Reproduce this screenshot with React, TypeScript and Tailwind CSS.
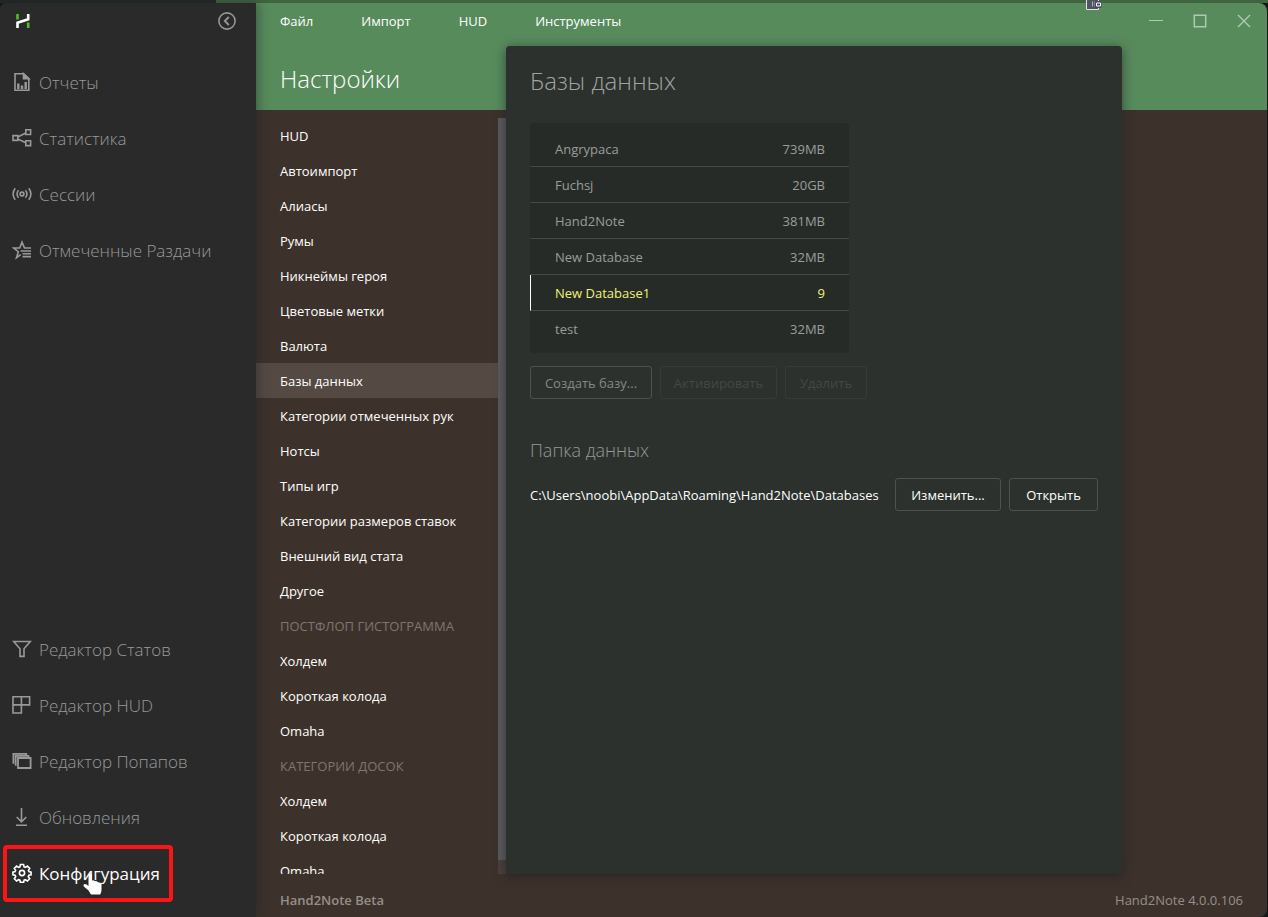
import React, { useState } from 'react';
import { clsx } from 'clsx';

interface IconProps {
  children: React.ReactNode;
}

function Icon({ children }: IconProps) {
  return (
    <svg viewBox="0 0 20 20" className="mb-[2px] w-5 h-5 shrink-0" fill="none" stroke="currentColor" strokeWidth="1.6" aria-hidden="true">
      {children}
    </svg>
  );
}

const mainItems = [
  {
    label: 'Отчеты',
    icon: (
      <Icon>
        <path d="M3 1.7h8.5l5.3 5v11.6H3z" />
        <path d="M11.5 1.7v5h5.3z" fill="currentColor" />
        <path d="M6.3 17v-5.5M10 17v-3.5M13.7 17v-7" strokeWidth="2.4" />
      </Icon>
    ),
  },
  {
    label: 'Статистика',
    icon: (
      <Icon>
        <path d="M1 7.6h4.8v4.8H1zM13.8 1.7h4.8v4.8h-4.8zM13.8 12.8h4.8v4.8h-4.8zM5.8 9l8-4M5.8 11l8 3.8" />
      </Icon>
    ),
  },
  {
    label: 'Сессии',
    icon: (
      <Icon>
        <circle cx="10" cy="10" r="1.9" />
        <path d="M6.6 6.2a5.4 5.4 0 0 0 0 7.600M13.4 6.2a5.4 5.4 0 0 1 0 7.600M3.2 4.300a9.6 9.6 0 0 0 0 11.4M16.8 4.300a9.6 9.6 0 0 1 0 11.4" />
      </Icon>
    ),
  },
  {
    label: 'Отмеченные Раздачи',
    icon: (
      <Icon>
        <path d="M19 8h-6.5L10 2.2 7.7 8H1.600l4.700 3.700-1.800 6 4.200-3M8.600 11H19M10.500 13.800H19M10.500 16.600H19" />
      </Icon>
    ),
  },
];

const bottomItems = [
  {
    label: 'Редактор Статов',
    icon: (
      <Icon>
        <path d="M1.700 2.500h16.600L12 9.800V17.400H8V9.800z" />
      </Icon>
    ),
  },
  {
    label: 'Редактор HUD',
    icon: (
      <Icon>
        <path d="M1 1.700h16.600v8.200H1zM9.400 1.700V18H1V9.900" />
      </Icon>
    ),
  },
  {
    label: 'Редактор Попапов',
    icon: (
      <Icon>
        <path d="M6 7h12.600v10H6z" strokeWidth="1.800" />
        <path d="M3.700 14.800V4.900h12.700V7M1.400 12.800V2.800h12.900v2" strokeWidth="1.800" />
      </Icon>
    ),
  },
  {
    label: 'Обновления',
    icon: (
      <Icon>
        <path d="M9.500 1v13.500M4.700 10l4.800 4.800 4.800-4.800M4 18.300h11" />
      </Icon>
    ),
  },
  {
    label: 'Конфигурация',
    icon: (
      <Icon>
        <circle cx="10" cy="10" r="2.600" />
        <path d="M8.400 1.500h3.200l.5 2.400 1.300.5 2-1.300 2.300 2.300-1.300 2 .5 1.200 2.200.6v2.600l-2.200.5-.6 1.400 1.400 2-2.300 2.300-2.100-1.300-1.200.5-.5 2.200H8.400l-.5-2.200-1.300-.5-2 1.300-2.300-2.300 1.400-2-.6-1.400-2.200-.5V9.200l2.200-.6.5-1.200-1.300-2 2.300-2.300 2 1.300 1.300-.5z" />
      </Icon>
    ),
  },
];

const menu = ['Файл', 'Импорт', 'HUD', 'Инструменты'];

const settings = [
  { label: 'HUD' },
  { label: 'Автоимпорт' },
  { label: 'Алиасы' },
  { label: 'Румы' },
  { label: 'Никнеймы героя' },
  { label: 'Цветовые метки' },
  { label: 'Валюта' },
  { label: 'Базы данных' },
  { label: 'Категории отмеченных рук' },
  { label: 'Нотсы' },
  { label: 'Типы игр' },
  { label: 'Категории размеров ставок' },
  { label: 'Внешний вид стата' },
  { label: 'Другое' },
  { label: 'ПОСТФЛОП ГИСТОГРАММА', heading: true },
  { label: 'Холдем' },
  { label: 'Короткая колода' },
  { label: 'Omaha' },
  { label: 'КАТЕГОРИИ ДОСОК', heading: true },
  { label: 'Холдем' },
  { label: 'Короткая колода' },
  { label: 'Omaha' },
];

const databases = [
  { name: 'Angrypaca', size: '739MB' },
  { name: 'Fuchsj', size: '20GB' },
  { name: 'Hand2Note', size: '381MB' },
  { name: 'New Database', size: '32MB' },
  { name: 'New Database1', size: '9', active: true },
  { name: 'test', size: '32MB' },
];

interface SideItemProps {
  label: string;
  icon: React.ReactNode;
  active: boolean;
  onClick: () => void;
}

function SideItem({ label, icon, active, onClick }: SideItemProps) {
  return (
    <button
      onClick={onClick}
      className={clsx(
        'relative flex h-14 w-full items-center gap-[7px] pl-3 text-left text-[17px] whitespace-nowrap',
        active ? 'text-white' : 'font-light text-[#999999]'
      )}
    >
      {icon}
      {label}
      {active && (
        <>
          <span className="absolute left-[3px] -top-px h-[57px] w-[170px] rounded-sm border-4 border-[#fa1616]" />
          <svg viewBox="0 0 20 24" className="absolute left-[83px] top-[27px] h-6 w-5 drop-shadow-md" fill="#fff" aria-hidden="true">
            <path d="M5.500 1.500Q7.200-.5 9 1.500V7.500q1.600-1 3 .8 1.700-.7 2.800 1 2.500-.3 3.700 1.700V17q0 2-1.300 4.500H8L5.500 17.500.8 13.500q-1-2 1-2.500 1.800 0 3.700 2z" />
          </svg>
        </>
      )}
    </button>
  );
}

function Sidebar() {
  const [current, setCurrent] = useState('Конфигурация');

  return (
    <aside className="relative z-10 flex w-64 shrink-0 flex-col rounded-tl-md bg-[#2a2a2a] pb-[15px] shadow-[2px_0_12px_rgba(20,30,40,0.45)]">
      <div className="mb-4 flex h-9 items-center justify-between pl-4 pr-5">
        <svg viewBox="0 0 14 14" className="h-[14px] w-[14px]" fill="none" strokeWidth="2.600" aria-label="Hand2Note">
          <path d="M1.500 0v5.500M12.200 8.500V14" stroke="#4cc12b" />
          <path d="M1.500 14V8.800L12.200 5.200V0" stroke="#fff" />
        </svg>
        <button aria-label="Свернуть" className="text-[#969696]">
          <svg viewBox="0 0 18 18" className="h-[18px] w-[18px]" fill="none" stroke="currentColor" strokeWidth="1.600">
            <circle cx="9" cy="9" r="8.100" />
            <path d="M10.800 5 6.800 9l4 4" strokeWidth="1.900" />
          </svg>
        </button>
      </div>
      <nav className="flex flex-1 flex-col">
        {mainItems.map((item) => (
          <SideItem key={item.label} {...item} active={current === item.label} onClick={() => setCurrent(item.label)} />
        ))}
        <div className="flex-1" />
        {bottomItems.map((item) => (
          <SideItem key={item.label} {...item} active={current === item.label} onClick={() => setCurrent(item.label)} />
        ))}
      </nav>
    </aside>
  );
}

function TitleBar() {
  return (
    <header className="flex h-[43px] shrink-0 items-center justify-between pb-[7px] pl-6 pr-4 text-white">
      <nav className="flex gap-12 pt-[2px] text-[13px] font-medium">
        {menu.map((item) => (
          <button key={item}>{item}</button>
        ))}
      </nav>
      <div className="flex gap-[30px] text-[#b0cab1]">
        <button aria-label="Свернуть окно">
          <svg viewBox="0 0 14 14" className="h-[14px] w-[14px]" fill="none" stroke="currentColor">
            <path d="M0 6.500h14" />
          </svg>
        </button>
        <button aria-label="Развернуть окно">
          <svg viewBox="0 0 14 14" className="h-[14px] w-[14px]" fill="none" stroke="currentColor">
            <path d="M1.300 1.300h11.400v11.400H1.300z" strokeWidth="1.500" />
          </svg>
        </button>
        <button aria-label="Закрыть">
          <svg viewBox="0 0 14 14" className="h-[14px] w-[14px]" fill="none" stroke="currentColor">
            <path d="m1 1 12 12M13 1 1 13" strokeWidth="1.400" />
          </svg>
        </button>
      </div>
    </header>
  );
}

function SettingsNav() {
  const [selected, setSelected] = useState(7);

  return (
    <div className="flex min-h-0 w-[250px] shrink-0 flex-col">
      <h1 className="flex h-[72px] shrink-0 items-start pl-6 pt-[15px] text-2xl leading-9 font-light text-white">Настройки</h1>
      <div className="flex min-h-0 flex-1">
        <ul className="min-w-0 flex-1 overflow-y-auto text-[13px] [scrollbar-width:none]">
          {settings.map((item, i) => (
            <li key={i} className="h-[35px]">
              {item.heading ? (
                <h2 className="flex h-full items-center pl-6 pt-[2px] whitespace-nowrap text-[#7e7671]">{item.label}</h2>
              ) : (
                <button
                  onClick={() => setSelected(i)}
                  className={clsx(
                    'flex h-full w-full items-center pl-6 pt-[2px] text-left font-medium whitespace-nowrap text-white',
                    selected === i && 'bg-[#554a43]'
                  )}
                >
                  {item.label}
                </button>
              )}
            </li>
          ))}
        </ul>
        <div className="w-2 bg-[#4b403c] pb-[14px]">
          <div className="h-full bg-[#5b5a5d]" />
        </div>
      </div>
    </div>
  );
}

function DatabasesPanel() {
  return (
    <main className="z-10 mr-[145px] flex-1 rounded bg-[#2c312e] px-6 pt-[17px] text-[13px] shadow-[0_2px_12px_rgba(25,25,35,0.6)]">
      <h2 className="text-2xl leading-9 font-light text-[#a0a3a1]">Базы данных</h2>
      <table className="mt-6 w-[319px] border-separate border-spacing-0 rounded bg-[#272b28] pt-2 pb-[6px] text-[#9a9d9b]">
        <tbody>
          {databases.map((db, i) => (
            <tr key={db.name} className={clsx('h-9', db.active && 'text-[#eef27a] font-medium')}>
              <td
                className={clsx(
                  'border-l p-0 pl-6 pt-[2px]',
                  db.active ? 'border-l-white' : 'border-l-transparent',
                  i < databases.length - 1 && 'border-b border-b-[#454a47]'
                )}
              >
                {db.name}
              </td>
              <td className={clsx('p-0 pr-6 pt-[2px] text-right', i < databases.length - 1 && 'border-b border-b-[#454a47]')}>
                {db.size}
              </td>
            </tr>
          ))}
        </tbody>
      </table>
      <div className="mt-[13px] flex gap-2">
        <button className="h-[33px] w-[122px] rounded-[3px] border border-[#4d524f] pt-[2px] text-[#858886]">Создать базу...</button>
        <button disabled className="h-[33px] w-[117px] rounded-[3px] border border-[#363b38] pt-[2px] text-[#434845]">
          Активировать
        </button>
        <button disabled className="h-[33px] w-[82px] rounded-[3px] border border-[#363b38] pt-[2px] text-[#434845]">
          Удалить
        </button>
      </div>
      <h3 className="mt-[35px] text-lg leading-8 font-light text-[#959896]">Папка данных</h3>
      <div className="mt-3 flex items-center gap-2 font-medium text-white">
        <span className="flex-1 pt-[2px] whitespace-nowrap">C:\Users\noobi\AppData\Roaming\Hand2Note\Databases</span>
        <button className="h-[33px] w-[106px] shrink-0 rounded-[3px] border border-[#4d524f] pt-[2px]">Изменить...</button>
        <button className="h-[33px] w-[89px] shrink-0 rounded-[3px] border border-[#4d524f] pt-[2px]">Открыть</button>
      </div>
    </main>
  );
}

export default function App() {
  return (
    <div className="relative flex h-screen flex-col overflow-hidden bg-[#171717] font-['Open_Sans','Noto_Sans',sans-serif]">
      <div className="flex h-[3px] shrink-0">
        <div className="w-[216px] bg-[#232924]" />
        <div className="flex-1 bg-[#40643f]" />
      </div>
      <div className="flex min-h-0 flex-1 pr-[1px]">
        <Sidebar />
        <div className="flex min-w-0 flex-1 flex-col rounded-r-lg bg-[linear-gradient(#588b5c_107px,#3d322b_107px)]">
          <TitleBar />
          <div className="flex min-h-0 flex-1">
            <SettingsNav />
            <DatabasesPanel />
          </div>
          <footer className="flex h-[43px] shrink-0 items-center justify-between pl-6 pr-6 pt-[10px] text-[13px] text-[#958f8b]">
            <span className="font-semibold">Hand2Note Beta</span>
            <span>Hand2Note 4.0.0.106</span>
          </footer>
        </div>
      </div>
      <svg viewBox="0 0 16 10" className="absolute right-[166px] top-0 h-[10px] w-4" fill="none" aria-hidden="true">
        <path d="M.5 0v9.500h12V0" fill="#4f5560" stroke="#e4e4e8" />
        <path d="M6.500 1.500v5M8.500 1.500v5" stroke="#a9b4ab" />
        <path d="M9 1.500h6v6H9z" fill="#4a4a60" stroke="#4a4a60" />
        <path d="M10.500 3h4v3h-4z" stroke="#fff" />
      </svg>
    </div>
  );
}
